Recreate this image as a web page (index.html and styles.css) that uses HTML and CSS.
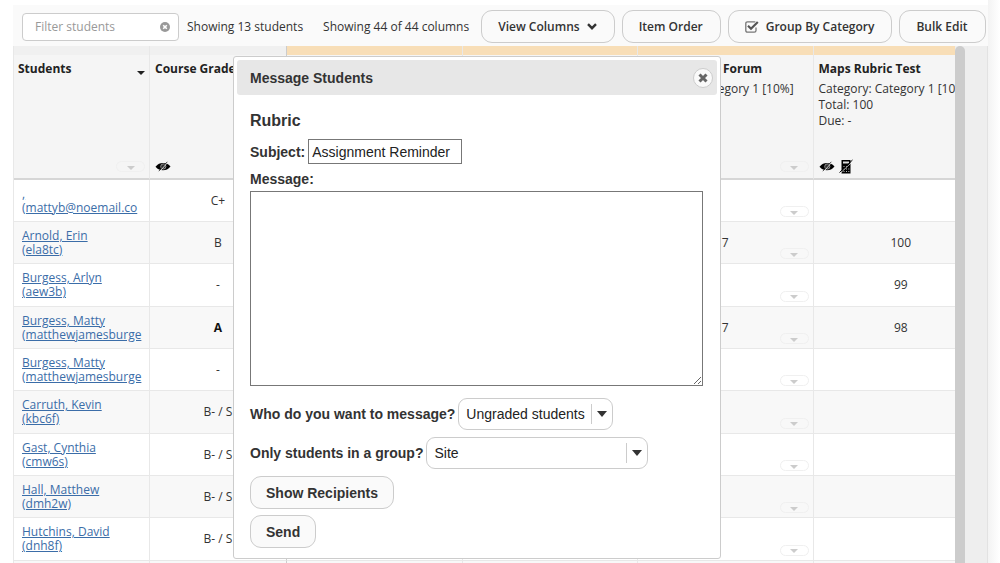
FILE: index.html
```html
<!DOCTYPE html>
<html lang="en">
<head>
<meta charset="utf-8">
<meta name="viewport" content="width=device-width, initial-scale=1">
<title>Gradebook</title>
<link rel="stylesheet" href="styles.css">
</head>
<body>
<svg class="sprite" aria-hidden="true">
  <symbol id="eye" viewBox="0 0 16 11">
    <path d="M.5 5.800C2.800 2.800 5 2 8 2s5.200.8 7.500 3.400C13.200 8.200 11 9.200 8 9.200S2.800 8.600.5 5.800Z" fill="#000"/>
    <circle cx="8.300" cy="5.500" r="2.600" fill="#333" stroke="#aaa" stroke-width=".8"/>
    <path d="M4.500 10.500 13 1" stroke="#f5f5f5" stroke-width="1"/>
    <path d="M3.800 10.200 12.300 .8" stroke="#222" stroke-width=".8"/>
  </symbol>
  <symbol id="calc" viewBox="0 0 15 15">
    <path d="M2.500 1h9v13.500h-9z" fill="#000"/>
    <path d="M4 2.500h6v2H4z" fill="#ddd"/>
    <path d="M4.500 7h1v1h-1zM7 7h1v1H7zM4.500 9.500h1v1h-1zM7 9.500h1v1H7zM9.300 9.500h1v1h-1zM4.500 12h1v1h-1zM7 12h1v1H7zM9.300 12h1v1h-1z" fill="#bbb"/>
    <path d="M1.500 14 14.300 1.800" stroke="#f5f5f5" stroke-width=".7"/>
    <path d="M.5 13.500 13.500 1" stroke="#000" stroke-width="1"/>
  </symbol>
  <symbol id="down" viewBox="0 0 8 4"><path d="M0 0h8L4 4Z" fill="currentColor"/></symbol>
</svg>

<main class="page">
  <div class="toolbar">
    <div class="filter">
      <input class="filter-input" type="text" placeholder="Filter students" aria-label="Filter students">
      <button class="filter-clear" type="button" aria-label="Clear filter">
        <svg width="10" height="10" viewBox="0 0 10 10"><circle cx="5" cy="5" r="5" fill="#999"/><path d="M3.200 3.200l3.600 3.600M6.800 3.200 3.200 6.800" stroke="#fff" stroke-width="1.600"/></svg>
      </button>
    </div>
    <span class="count">Showing 13 students</span>
    <span class="count">Showing 44 of 44 columns</span>
    <div class="actions">
      <button class="btn" type="button">View Columns
        <svg width="10" height="7" viewBox="0 0 10 7"><path d="M1 1.200 5 5.200 9 1.200" fill="none" stroke="#333" stroke-width="2.400"/></svg>
      </button>
      <button class="btn" type="button">Item Order</button>
      <button class="btn" type="button">
        <svg width="14" height="13" viewBox="0 0 14 13"><path d="M11 7.500v3q0 1.700-1.700 1.700H2.500Q.8 12.200.8 10.500V3.500q0-1.700 1.700-1.700h6.800q.7 0 1 .2" fill="none" stroke="#777" stroke-width="1.300"/><path d="M3 5.800 6 8.800 12.800 2" fill="none" stroke="#555" stroke-width="2.200"/></svg>
        Group By Category</button>
      <button class="btn" type="button">Bulk Edit</button>
    </div>
  </div>

  <div class="sheet">
    <div class="grid">
      <table class="grades">
        <colgroup><col class="c-student"><col class="c-course"><col class="c-item"><col class="c-item"><col class="c-item"><col class="c-item"></colgroup>
        <thead>
          <tr class="bands"><td></td><td></td><td></td><td></td><td></td><td></td></tr>
          <tr class="heads">
            <th scope="col"><div class="head"><div class="title">Students <svg class="sort" width="8" height="4"><use href="#down"/></svg></div><div class="foot end"><button class="menu" type="button" aria-label="Column options"><svg width="8" height="4"><use href="#down"/></svg></button></div></div></th>
            <th scope="col"><div class="head"><div class="title">Course Grade</div><div class="foot"><svg width="16" height="11"><use href="#eye"/></svg></div></div></th>
            <td></td>
            <td></td>
            <th scope="col"><div class="head"><div class="title title-end">Forum</div><div class="meta">Category: Category 1 [10%]</div><div class="foot end"><button class="menu" type="button" aria-label="Column options"><svg width="8" height="4"><use href="#down"/></svg></button></div></div></th>
            <th scope="col"><div class="head"><div class="title">Maps Rubric Test</div><div class="meta">Category: Category 1 [10%]<br>Total: 100<br>Due: -</div><div class="foot"><svg width="16" height="11"><use href="#eye"/></svg><svg width="15" height="15"><use href="#calc"/></svg></div></div></th>
          </tr>
        </thead>
        <tbody id="rows"></tbody>
      </table>
    </div>
    <div class="scrollbar"></div>
  </div>
</main>

<section class="dialog" role="dialog" aria-labelledby="dialog-title">
  <header class="dialog-bar">
    <h2 class="dialog-title" id="dialog-title">Message Students</h2>
    <button class="close" type="button" aria-label="Close"><svg width="10" height="10" viewBox="0 0 10 10"><path d="M1.500 1.500l7 7M8.500 1.500l-7 7" stroke="#666" stroke-width="3"/></svg></button>
  </header>
  <form class="form">
    <h3 class="item-name">Rubric</h3>
    <div class="line"><label for="subject">Subject:</label><input class="subject-input" id="subject" type="text" value="Assignment Reminder"></div>
    <label class="message-label" for="message">Message:</label>
    <textarea class="message" id="message"></textarea>
    <div class="line"><label for="who">Who do you want to message?</label>
      <span class="pick"><select class="select" id="who"><option>Ungraded students</option></select><svg class="pick-arrow" width="10" height="6" viewBox="0 0 8 4" preserveAspectRatio="none"><use href="#down"/></svg></span></div>
    <div class="line"><label for="group">Only students in a group?</label>
      <span class="pick"><select class="select select-wide" id="group"><option>Site</option></select><svg class="pick-arrow" width="10" height="6" viewBox="0 0 8 4" preserveAspectRatio="none"><use href="#down"/></svg></span></div>
    <button class="btn dialog-btn" type="button">Show Recipients</button>
    <button class="btn dialog-btn" type="button">Send</button>
  </form>
</section>
<script src="rows.js"></script>
</body>
</html>
```
FILE: styles.css
```css
* { box-sizing: border-box; }
body {
  margin: 0;
  min-height: 100vh;
  overflow: hidden;
  position: relative;
  font: 12px/16px "Open Sans", sans-serif;
  color: #333;
  background: #fff;
}
.sprite { position: absolute; width: 0; height: 0; }
svg { display: block; flex: none; }
button, input, select, textarea { font: inherit; color: inherit; margin: 0; }

.page {
  height: 100vh;
  padding: 5px 12px 0 13px;
  display: flex;
  flex-direction: column;
  background: linear-gradient(to right, #fff calc(100% - 12px), #f3f3f3 calc(100% - 12px), #fff);
}
.toolbar {
  display: flex;
  align-items: center;
  flex: none;
  height: 41px;
  padding: 2px 4px 0 9px;
  background: #fafafa;
  white-space: nowrap;
}
.filter {
  display: flex;
  align-items: center;
  width: 157px;
  height: 28px;
  padding: 0 8px 0 12px;
  border: 1px solid #ccc;
  border-radius: 4px;
  background: #fff;
}
.filter-input { flex: 1; min-width: 0; padding: 0; border: 0; outline: 0; background: none; }
.filter-input::placeholder { color: #999; opacity: 1; }
.filter-clear { padding: 0; border: 0; background: none; }
.count { margin: 0 12px 0 8px; }
.actions { display: flex; gap: 7px; margin-left: auto; }
.btn {
  display: flex;
  align-items: center;
  gap: 7px;
  height: 33px;
  padding: 0 16px;
  border: 1px solid #ccc;
  border-radius: 11px;
  background: #fafafa;
  font-weight: 600;
  white-space: nowrap;
}
.toolbar .btn { padding: 0 17px 0 16px; }

.sheet { display: flex; flex: 1; min-height: 0; padding-right: 22px; background: #eee; border-right: 1px solid #e2e2e2; }
.grid { flex: 1; min-width: 0; overflow: hidden; }
.scrollbar { width: 10px; border-radius: 5px 5px 0 0; background: #ccc; }
.grades { width: 976px; table-layout: fixed; border-collapse: separate; border-spacing: 0; background: #fff; border-left: 1px solid #e8e8e8; }
.grades td, .grades th { padding: 0; border-right: 1px solid #e8e8e8; text-align: center; font-weight: 400; }
.c-student { width: 136px; }
.c-course { width: 137px; }
.bands td { height: 9px; background: #f8deb7; }
.bands td:nth-child(-n+2) { background: #f0f0f0; }
.grades tr > :nth-child(2) { border-right-color: #ccc; }
.heads { height: 125px; background: #f5f5f5; }
.heads > * { border-bottom: 2px solid #d6d6d6; }
.heads > th { text-align: left; }
.head { display: flex; flex-direction: column; height: 123px; padding: 6px 4px 4px 5px; white-space: nowrap; overflow: hidden; color: #333; }
.heads > :first-child .head { padding-left: 4px; }
.title { display: flex; justify-content: space-between; align-items: center; height: 16px; margin-bottom: 4px; font-weight: 700; color: #222; }
.title-end { padding-left: 80px; }
.sort { margin-top: 7px; color: #222; }
.foot { display: flex; align-items: center; gap: 4px; height: 15px; margin-top: auto; }
.end { justify-content: flex-end; }
.menu { display: flex; align-items: center; justify-content: center; width: 29px; height: 11px; padding: 2px 0 0; border: 1px solid #f0f0f0; border-radius: 6px; background: transparent; color: #ccc; }
.row { height: 42px; }
.row:nth-child(3n) { height: 43px; }
.row:nth-child(even) { background: #f8f8f8; }
.grades .row > * { border-bottom: 1px solid #e8e8e8; }
.student { width: 120px; margin-left: 8px; overflow: hidden; text-align: left; line-height: 14px; white-space: nowrap; }
.student a { color: #3b6da8; }
.cell { display: grid; align-items: center; height: 41px; }
.cell > * { grid-area: 1 / 1; }
.cell .menu { justify-self: end; align-self: end; margin: 0 4px 4px; }
.grades .strong { font-weight: 700; color: #111; }

.dialog {
  position: absolute;
  top: 56px;
  left: 233px;
  width: 488px;
  padding: 3px;
  border: 1px solid #ccc;
  border-radius: 3px;
  background: #fff;
  font: 14px/16px "Liberation Sans", Arial, sans-serif;
  color: #333;
}
.dialog-bar { display: flex; align-items: center; justify-content: space-between; height: 35px; padding: 0 4px 0 13px; border-radius: 3px; background: #e7e7e7; }
.dialog-title { margin: 0; font-size: 14px; }
.close { display: flex; align-items: center; justify-content: center; width: 20px; height: 20px; padding: 0; border: 1px solid #ccc; border-radius: 50%; background: #fafafa; }
.form { display: flex; flex-direction: column; align-items: flex-start; padding: 16px 13px 1px; font-weight: 700; }
.item-name { margin: 0 0 8px; font-size: 16px; line-height: 20px; }
.line { display: flex; align-items: center; gap: 3px; margin-bottom: 7px; }
.subject-input { width: 154px; height: 25px; padding: 0 3px; border: 1px solid #777; background: #fff; }
.message-label { margin-bottom: 4px; }
.message { width: 453px; height: 195px; margin-bottom: 12px; border: 1px solid #777; background: #fff; }
.pick { display: grid; align-items: center; }
.pick > * { grid-area: 1 / 1; }
.pick::after { content: ""; grid-area: 1 / 1; justify-self: end; width: 1px; height: 20px; margin-right: 21px; background: #ccc; }
.pick-arrow { justify-self: end; margin-right: 6px; pointer-events: none; }
.select { appearance: none; width: 155px; height: 32px; padding: 0 7px; border: 1px solid #ccc; border-radius: 9px; background: #fff; }
.select-wide { width: 222px; }
.subject-input, .select, .message { font-weight: 400; color: #222; }
.dialog-btn { margin-bottom: 6px; padding: 0 15px; font-weight: 700; }
```
FILE: rows.js
```js
const rows = [
  [",", "(mattyb@noemail.co", "C+", "", ""],
  ["Arnold, Erin", "(ela8tc)", "B", "7", "100"],
  ["Burgess, Arlyn", "(aew3b)", "-", "", "99"],
  ["Burgess, Matty", "(matthewjamesburge", "A", "7", "98"],
  ["Burgess, Matty", "(matthewjamesburge", "-", "", ""],
  ["Carruth, Kevin", "(kbc6f)", "B- / S", "", ""],
  ["Gast, Cynthia", "(cmw6s)", "B- / S", "", ""],
  ["Hall, Matthew", "(dmh2w)", "B- / S", "", ""],
  ["Hutchins, David", "(dnh8f)", "B- / S", "", ""],
  ["", "", "", "", ""]
];
const menu = '<button class="menu" type="button" aria-label="Cell options"><svg width="8" height="4"><use href="#down"/></svg></button>';
document.getElementById("rows").innerHTML = rows.map(([name, id, grade, forum, maps]) => `
  <tr class="row">
    <th scope="row"><div class="student">${name || id ? `<a href="#">${name}<br>${id}</a>` : ""}</div></th>
    <td class="${grade === "A" ? "strong" : ""}">${grade}</td>
    <td></td><td></td>
    <td><div class="cell"><span>${forum}</span>${menu}</div></td>
    <td>${maps}</td>
  </tr>`).join("");
```
